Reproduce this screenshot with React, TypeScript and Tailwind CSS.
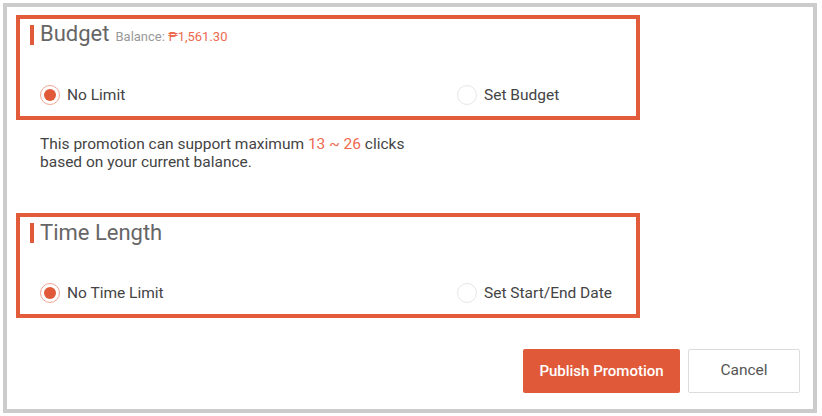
import type { ReactNode } from 'react';

// shared pieces for the promotion form
interface RadioProps {
  checked?: boolean;
  label: string;
}

function Radio({ checked = false, label }: RadioProps) {
  return (
    <div className="flex items-center">
      {checked ? (
        <span className="flex h-[20px] w-[20px] items-center justify-center rounded-full border border-[#f2a594] bg-white">
          <span className="h-[12px] w-[12px] rounded-full bg-[#e05a3a]" />
        </span>
      ) : (
        <span className="h-[20px] w-[20px] rounded-full border border-[#e6e6e6] bg-white" />
      )}
      <span className="ml-[7px] text-[15.5px] leading-[20px] text-[#444]">{label}</span>
    </div>
  );
}

interface SectionProps {
  title: string;
  extra?: ReactNode;
  left: string;
  right: string;
}

function Section({ title, extra, left, right }: SectionProps) {
  return (
    <div className="ml-[9px] w-[624px] border-4 border-[#e25c3b] pt-[6px] pb-[11px]">
      <div className="flex h-[20px] items-center pl-[10px]">
        <span className="h-[20px] w-[4px] bg-[#e05a3a]" />
        <div className="ml-[6px] flex items-baseline">
          <span className="text-[22px] leading-[20px] text-[#666]">{title}</span>
          {extra}
        </div>
      </div>
      <div className="mt-[40px] flex h-[20px] items-center pl-[20px]">
        <div className="w-[417px]">
          <Radio checked label={left} />
        </div>
        <Radio label={right} />
      </div>
    </div>
  );
}

export default function App() {
  return (
    <div className="bg-white p-[3px]" style={{ fontFamily: 'Roboto, "Liberation Sans", sans-serif' }}>
      <div className="flex h-[410px] w-[814px] flex-col border-4 border-[#cccccc] bg-white pt-[8px]">
        <Section
          title="Budget"
          left="No Limit"
          right="Set Budget"
          extra={
            <span className="ml-[6px] text-[13px] text-[#999]">
              Balance: <span className="text-[#ee6a50]">₱1,561.30</span>
            </span>
          }
        />

        <p className="ml-[33px] mt-[15px] text-[15.5px] leading-[18px] text-[#444]">
          This promotion can support maximum <span className="text-[#ee6a50]">13 ~ 26</span> clicks
          <br />
          based on your current balance.
        </p>

        <div className="mt-[42px]">
          <Section title="Time Length" left="No Time Limit" right="Set Start/End Date" />
        </div>

        <div className="mr-[13px] mt-[31px] flex justify-end gap-[8px]">
          <button className="h-[44px] w-[157px] rounded-[2px] bg-[#e05a3a] text-[15px] font-medium text-white">
            Publish Promotion
          </button>
          <button className="h-[44px] w-[112px] rounded-[2px] border border-[#dcdcdc] bg-white text-[15.5px] text-[#555]">
            Cancel
          </button>
        </div>
      </div>
    </div>
  );
}
